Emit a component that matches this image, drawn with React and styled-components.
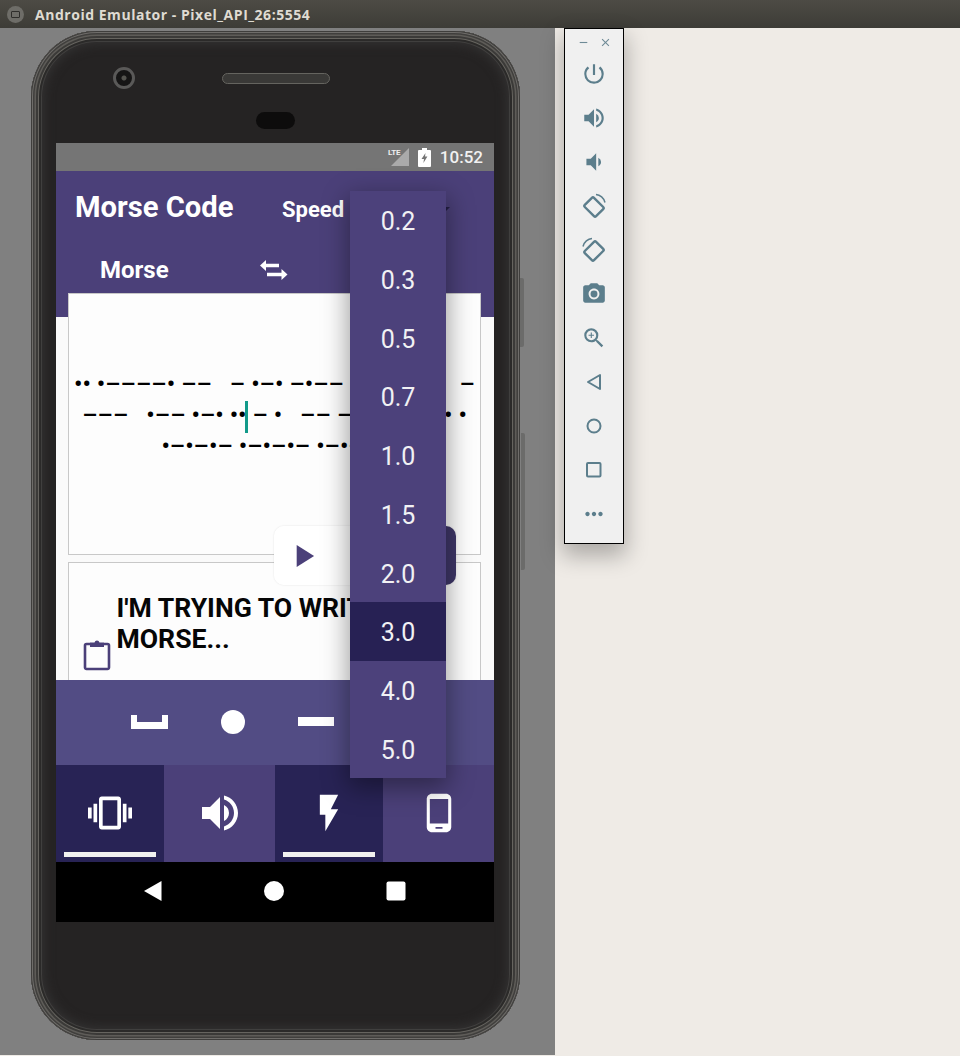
import React from "react";
import styled, { createGlobalStyle } from "styled-components";
import {
  MdVibration, MdVolumeUp, MdVolumeDown, MdFlashOn, MdPhoneAndroid, MdPlayArrow,
  MdPowerSettingsNew, MdPhotoCamera, MdZoomIn, MdMoreHoriz, MdClose, MdRemove,
} from "react-icons/md";

const Global = createGlobalStyle`
  html, body { margin: 0; padding: 0; background: #efebe6; overflow: hidden; }
  * { box-sizing: border-box; }
  #root { width: 960px; height: 1056px; font-family: Roboto, "Liberation Sans", sans-serif; }
`;

const Desktop = styled.div`
  position: relative; width: 960px; height: 1056px; display: flex; flex-direction: column; overflow: hidden;
`;
const TitleBar = styled.header`
  height: 28px; flex: none; display: flex; align-items: center; gap: 11px; padding-left: 7px;
  background: linear-gradient(#4d4b45, #3d3c37); color: #dfdbd2;
  font: 700 14px "Open Sans", "DejaVu Sans", sans-serif; letter-spacing: 0.53px;
`;
const WindowDot = styled.span`
  width: 17px; height: 17px; border-radius: 50%; background: #6e6d68; display: flex; align-items: center; justify-content: center;
  &::after { content: ""; width: 7px; height: 5px; border: 1px solid #2f2e2b; border-radius: 1px; }
`;
const Workspace = styled.main`
  flex: 1; display: flex; min-height: 0;
`;
const EmulatorPane = styled.section`
  width: 555px; height: 1027px; flex: none; background: #808080; padding: 3px 0 0 31px;
`;
const Phone = styled.div`
  position: relative; width: 489px; height: 1009px; padding: 112px 0 0 25px; border-radius: 66px; background: #252323;
  box-shadow:
    inset 0 0 0 1px #3f3e3c, inset 0 0 0 2px #6f6d6a, inset 0 0 0 3.5px #403f3d, inset 0 0 0 5px #5e5c58,
    inset 0 0 0 7px #3b3a38, inset 0 0 0 8px #66645f, inset 0 0 0 10px #2b2a29, inset 0 0 0 11px #403f3e,
    inset 0 0 12px 12px #363535;
`;
const SideKey = styled.span`
  position: absolute; right: ${p => p.$right}px; top: ${p => p.$top}px; width: 4px; height: ${p => p.$h}px;
  background: #6b6b6a; border-radius: 0 2px 2px 0;
`;
const Camera = styled.span`
  position: absolute; left: 82px; top: 36px; width: 22px; height: 22px; border-radius: 50%;
  border: 3.5px solid #5a5958; background: radial-gradient(circle, #55544f 0 2px, #161515 3px 8px);
`;
const Speaker = styled.span`
  position: absolute; left: 191px; top: 42px; width: 108px; height: 11px; border-radius: 6px;
  border: 1.5px solid #65645f; background: #3a3937;
`;
const Sensor = styled.span`
  position: absolute; left: 225px; top: 81px; width: 39px; height: 17px; border-radius: 9px; background: #0d0c0c;
`;
const Screen = styled.div`
  position: relative; width: 438px; height: 779px; display: flex; flex-direction: column; overflow: hidden; background: #fafafa;
`;
const StatusBar = styled.div`
  height: 28px; flex: none; background: #757575; display: flex; align-items: center; justify-content: flex-end;
  padding-right: 11px; color: #f1f1f1; font-size: 17px; font-weight: 500;
`;
const Lte = styled.span`
  position: absolute; left: 332px; top: 5px; font-size: 8px; font-weight: 700; color: #eee; letter-spacing: -0.2px;
`;
const SignalIcon = styled.svg`width: 20px; height: 18px; margin-right: 8px; flex: none;`;
const BatteryIcon = styled.svg`width: 13px; height: 19px; margin-right: 9px; flex: none;`;
const AppArea = styled.div`
  height: 509px; flex: none; overflow: hidden; display: flex; flex-direction: column;
`;
const AppBar = styled.div`
  height: 146px; flex: none; background: #4b4079; color: #fff; display: flex; flex-direction: column;
`;
const HeaderRow = styled.div`
  height: 72px; display: flex; align-items: center; padding: 0 0 0 19px;
`;
const AppTitle = styled.h1`
  margin: 0; font-size: 29.2px; line-height: 1; font-weight: 700; width: 207px; flex: none; position: relative; top: 0.5px;
`;
const SpeedLabel = styled.span`
  font-size: 22px; font-weight: 700; width: 158px; flex: none; position: relative; top: 2px;
`;
const SpinnerArrow = styled.span`
  width: 0; height: 0; border-left: 5px solid transparent; border-right: 5px solid transparent; border-top: 5px solid #241f45;
  position: relative; top: 2px;
`;
const LangRow = styled.div`
  height: 50px; display: flex; align-items: center; padding-left: 44px; font-size: 24px; font-weight: 700;
`;
const LangLabel = styled.span`width: 158px; flex: none; position: relative; top: 2px;`;
const SwapIcon = styled.svg`width: 30px; height: 24px; flex: none; position: relative; top: 2px;`;
const MorseCard = styled.div`
  height: 262px; flex: none; margin: -24px 13px 0 12px; background: #fdfdfd; border: 1.5px solid #c8c8c8; padding-top: 75px;
  display: flex; flex-direction: column; align-items: center;
`;
const MorseLine = styled.div`
  white-space: pre; font-size: 24px; font-weight: 500; line-height: 31px; color: #000; height: 31px; text-align: center;
`;
const Caret = styled.span`
  display: inline-block; width: 2.5px; height: 32px; margin: 0 4.5px 0 -1px; background: #129a8a; vertical-align: middle;
`;
const TextCard = styled.div`
  flex: 1; margin: 7px 13px 0 12px; background: #fdfdfd; border: 1.5px solid #c8c8c8; border-bottom: none; display: flex; padding-left: 13.5px;
`;
const ClipIcon = styled.svg`width: 28px; height: 34px; flex: none; margin-top: 75px;`;
const PlainText = styled.p`
  margin: 29px 0 0 6px; font-size: 26.6px; font-weight: 700; line-height: 31px; color: #060606; width: 340px;
`;
const PlayGroup = styled.div`
  position: absolute; left: 218px; top: 383px; width: 182px; height: 59px; border-radius: 10px; overflow: hidden; display: flex;
  box-shadow: 0 0 2px rgba(0,0,0,.12);
`;
const PlaySide = styled.span`
  width: 50%; background: ${p => p.$dark ? "#3f3769" : "#fff"}; color: #4b4079; display: flex; align-items: center; padding-left: 10px;
`;
const Keypad = styled.div`
  height: 85px; flex: none; background: #524c84; display: flex; align-items: center; padding: 0 0 2px 75px;
`;
const KeySlot = styled.span`width: ${p => p.$w}px; flex: none; display: flex; align-items: center; height: 26px;`;
const SpaceKey = styled.svg`width: 37px; height: 14px;`;
const DotKey = styled.span`width: 24px; height: 24px; border-radius: 50%; background: #fff; margin-left: 6px;`;
const DashKey = styled.span`width: 36px; height: 9px; background: #fff;`;
const Tabs = styled.nav`
  height: 97px; flex: none; display: grid; grid-template-columns: 108px 111px 108px 111px;
`;
const Tab = styled.div`
  position: relative; background: ${p => p.$active ? "#282355" : "#4b4079"}; color: #fff;
  display: flex; justify-content: center; align-items: center; padding-bottom: 1px; font-size: 44px;
  svg { display: block; }
  ${p => p.$active ? `&::after { content: ""; position: absolute; left: 8px; right: 8px; bottom: 5px; height: 5px; background: #f1f1ef; }` : ""}
`;
const NavBar = styled.div`
  height: 60px; flex: none; background: #000; display: grid; grid-template-columns: repeat(3, 121.5px); padding: 18px 0 0 36px;
  justify-items: center; align-items: start;
`;
const NavIcon = styled.svg`width: 22px; height: 22px; fill: #fff; display: block;`;
const SpeedMenu = styled.ul`
  position: absolute; left: 294px; top: 48px; width: 96px; height: 587px; margin: 0; padding: 0; list-style: none;
  background: #4c417b; box-shadow: 0 8px 24px 2px rgba(0,0,0,.38); display: flex; flex-direction: column;
`;
const SpeedOption = styled.li`
  flex: 1; display: flex; align-items: center; justify-content: center; color: #f1f1f4; font-size: 25px; font-weight: 400;
  padding-top: 3px; background: ${p => p.$selected ? "#272154" : "transparent"};
`;
const ToolPanel = styled.aside`
  position: absolute; left: 564px; top: 28px; width: 60px; height: 516px; background: #f0f0f0; border: 1px solid #000;
  box-shadow: 0 10px 22px 2px rgba(0,0,0,.28); display: flex; flex-direction: column; align-items: center; color: #5c7e8c;
`;
const ToolHeader = styled.div`
  height: 23px; width: 100%; display: flex; align-items: center; justify-content: space-between; padding: 3px 11px 0 12px;
  color: #6e8a96; font-size: 13px;
`;
const ToolButton = styled.div`
  height: 44px; flex: none; display: flex; align-items: center; justify-content: center; font-size: 26px;
`;
const ToolSvg = styled.svg`width: 26px; height: 26px; display: block;`;

const speeds = ["0.2", "0.3", "0.5", "0.7", "1.0", "1.5", "2.0", "3.0", "4.0", "5.0"];
const tabs = [
  { icon: <MdVibration />, active: true },
  { icon: <MdVolumeUp size={48} />, active: false },
  { icon: <MdFlashOn />, active: true },
  { icon: <MdPhoneAndroid size={42} />, active: false },
];

export default function App() {
  return (
    <Desktop>
      <Global />
      <TitleBar><WindowDot />Android Emulator - Pixel_API_26:5554</TitleBar>
      <Workspace>
        <EmulatorPane>
          <Phone>
            <SideKey $right={-4} $top={247} $h={69} />
            <SideKey $right={-5} $top={402} $h={137} />
            <Camera /><Speaker /><Sensor />
            <Screen>
              <StatusBar>
                <Lte>LTE</Lte>
                <SignalIcon viewBox="0 0 20 18"><path d="M19 0v18H1z" fill="#aaa" /></SignalIcon>
                <BatteryIcon viewBox="0 0 13 19">
                  <path fillRule="evenodd" d="M4 0h5v2h3a1 1 0 0 1 1 1v15a1 1 0 0 1-1 1H1a1 1 0 0 1-1-1V3a1 1 0 0 1 1-1h3zM7.5 5 3.5 11h2.5l-.6 4 4-6.500H7z" fill="#fff" />
                </BatteryIcon>
                10:52
              </StatusBar>
              <AppArea>
                <AppBar>
                  <HeaderRow>
                    <AppTitle>Morse Code</AppTitle>
                    <SpeedLabel>Speed</SpeedLabel>
                    <SpinnerArrow />
                  </HeaderRow>
                  <LangRow>
                    <LangLabel>Morse</LangLabel>
                    <SwapIcon viewBox="0 0 30 24">
                      <path d="M8 2 2 7.500l6 5.500V9.300h13V5.700H8zM23.500 11v3.700H9v3.600h14.500V22l6-5.500z" fill="#fff" />
                    </SwapIcon>
                  </LangRow>
                </AppBar>
                <MorseCard>
                  <MorseLine>{"•• •––––• ––   – •–• –•–– •• –• ––•   –"}</MorseLine>
                  <MorseLine>{"–––   •–– •–• ••"}<Caret />{"– •   –– ––– •–• ••• •"}</MorseLine>
                  <MorseLine>{"•–•–•– •–•–•– •–•–•–"}</MorseLine>
                </MorseCard>
                <TextCard>
                  <ClipIcon viewBox="0 0 28 34">
                    <path d="M7 6H3.500A1.500 1.500 0 0 0 2 7.500v22A1.500 1.500 0 0 0 3.500 31h21a1.500 1.500 0 0 0 1.500-1.500v-22A1.500 1.500 0 0 0 24.500 6H21" fill="none" stroke="#4b4079" strokeWidth="2.600" />
                    <path d="M7 4.500h4.500a2.600 2.600 0 0 1 5 0H21V9H7z" fill="#4b4079" />
                  </ClipIcon>
                  <PlainText>I'M TRYING TO WRITE MORSE...</PlainText>
                </TextCard>
              </AppArea>
              <Keypad>
                <KeySlot $w={84}><SpaceKey viewBox="0 0 37 14"><path d="M0 0h6v7h25V0h6v14H0z" fill="#fff" /></SpaceKey></KeySlot>
                <KeySlot $w={83}><DotKey /></KeySlot>
                <KeySlot $w={40}><DashKey /></KeySlot>
              </Keypad>
              <Tabs>
                {tabs.map((t, i) => <Tab key={i} $active={t.active}>{t.icon}</Tab>)}
              </Tabs>
              <NavBar>
                <NavIcon viewBox="0 0 22 22"><path d="M19.500 1v20L2 11z" /></NavIcon>
                <NavIcon viewBox="0 0 22 22"><circle cx="11" cy="11" r="10" /></NavIcon>
                <NavIcon viewBox="0 0 22 22"><rect x="1.500" y="1.500" width="19" height="19" rx="2" /></NavIcon>
              </NavBar>
              <PlayGroup>
                <PlaySide><MdPlayArrow size={38} /></PlaySide>
                <PlaySide $dark />
              </PlayGroup>
              <SpeedMenu>
                {speeds.map(s => <SpeedOption key={s} $selected={s === "3.0"}>{s}</SpeedOption>)}
              </SpeedMenu>
            </Screen>
          </Phone>
        </EmulatorPane>
      </Workspace>
      <ToolPanel>
        <ToolHeader><MdRemove /><MdClose /></ToolHeader>
        <ToolButton><MdPowerSettingsNew /></ToolButton>
        <ToolButton><MdVolumeUp /></ToolButton>
        <ToolButton><MdVolumeDown /></ToolButton>
        <ToolButton>
          <ToolSvg viewBox="0 0 26 26" fill="none" stroke="currentColor">
            <rect x="6.500" y="6" width="13" height="16" rx="1.500" transform="rotate(-45 13 14)" strokeWidth="2.400" />
            <path d="M15 1.500c4 .3 8 3.500 9 8" strokeWidth="1.500" />
          </ToolSvg>
        </ToolButton>
        <ToolButton>
          <ToolSvg viewBox="0 0 26 26" fill="none" stroke="currentColor">
            <rect x="6.500" y="6" width="13" height="16" rx="1.500" transform="rotate(45 13 14)" strokeWidth="2.400" />
            <path d="M11 1.500c-4 .3-8 3.500-9 8" strokeWidth="1.500" />
          </ToolSvg>
        </ToolButton>
        <ToolButton><MdPhotoCamera /></ToolButton>
        <ToolButton><MdZoomIn /></ToolButton>
        <ToolButton>
          <ToolSvg viewBox="0 0 26 26" fill="none" stroke="currentColor" strokeWidth="2"><path d="M19 6v14L7 13z" strokeLinejoin="round" /></ToolSvg>
        </ToolButton>
        <ToolButton>
          <ToolSvg viewBox="0 0 26 26" fill="none" stroke="currentColor" strokeWidth="2"><circle cx="13" cy="13" r="6.500" /></ToolSvg>
        </ToolButton>
        <ToolButton>
          <ToolSvg viewBox="0 0 26 26" fill="none" stroke="currentColor" strokeWidth="2"><rect x="6" y="6" width="13.500" height="13.500" rx="1" /></ToolSvg>
        </ToolButton>
        <ToolButton><MdMoreHoriz /></ToolButton>
      </ToolPanel>
    </Desktop>
  );
}
